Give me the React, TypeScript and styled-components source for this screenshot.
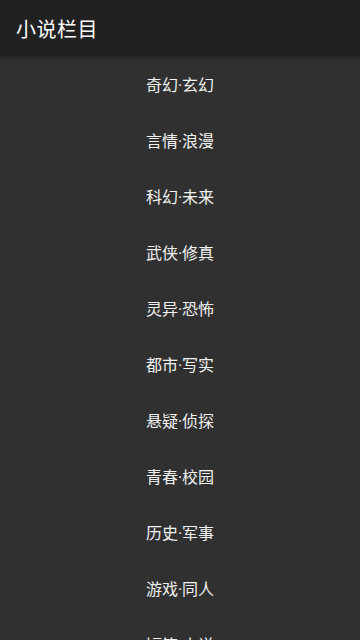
import styled, { createGlobalStyle } from 'styled-components';

const GlobalStyle = createGlobalStyle`
  html, body {
    margin: 0;
    padding: 0;
    background: #303030;
  }
  body {
    font-family: Roboto, "Noto Sans CJK SC", sans-serif;
    color: #ffffff;
  }
`;

const Wrapper = styled.div`
  display: flex;
  flex-direction: column;
  width: 360px;
  height: 640px;
  overflow: hidden;
  background: #303030;
`;

const Toolbar = styled.header`
  display: flex;
  align-items: center;
  flex-shrink: 0;
  height: 56px;
  padding: 0 16px;
  background: #212121;
  box-shadow: 0 2px 4px rgba(0, 0, 0, 0.25);
`;

const Title = styled.h1`
  margin: 0;
  font-size: 20px;
  font-weight: 400;
  letter-spacing: 0.5px;
`;

const List = styled.ul`
  margin: 0;
  padding: 0;
  list-style: none;
`;

const Item = styled.li`
  display: flex;
  align-items: center;
  justify-content: center;
  height: 56px;
  font-size: 16px;
  color: #f2f2f2;
`;

const columns = [
  '奇幻·玄幻',
  '言情·浪漫',
  '科幻·未来',
  '武侠·修真',
  '灵异·恐怖',
  '都市·写实',
  '悬疑·侦探',
  '青春·校园',
  '历史·军事',
  '游戏·同人',
  '短篇·小说',
];

const App = () => {
  return (
    <Wrapper>
      <GlobalStyle />
      <Toolbar>
        <Title>小说栏目</Title>
      </Toolbar>
      <List>
        {columns.map((name) => (
          <Item key={name}>{name}</Item>
        ))}
      </List>
    </Wrapper>
  );
};

export default App;
